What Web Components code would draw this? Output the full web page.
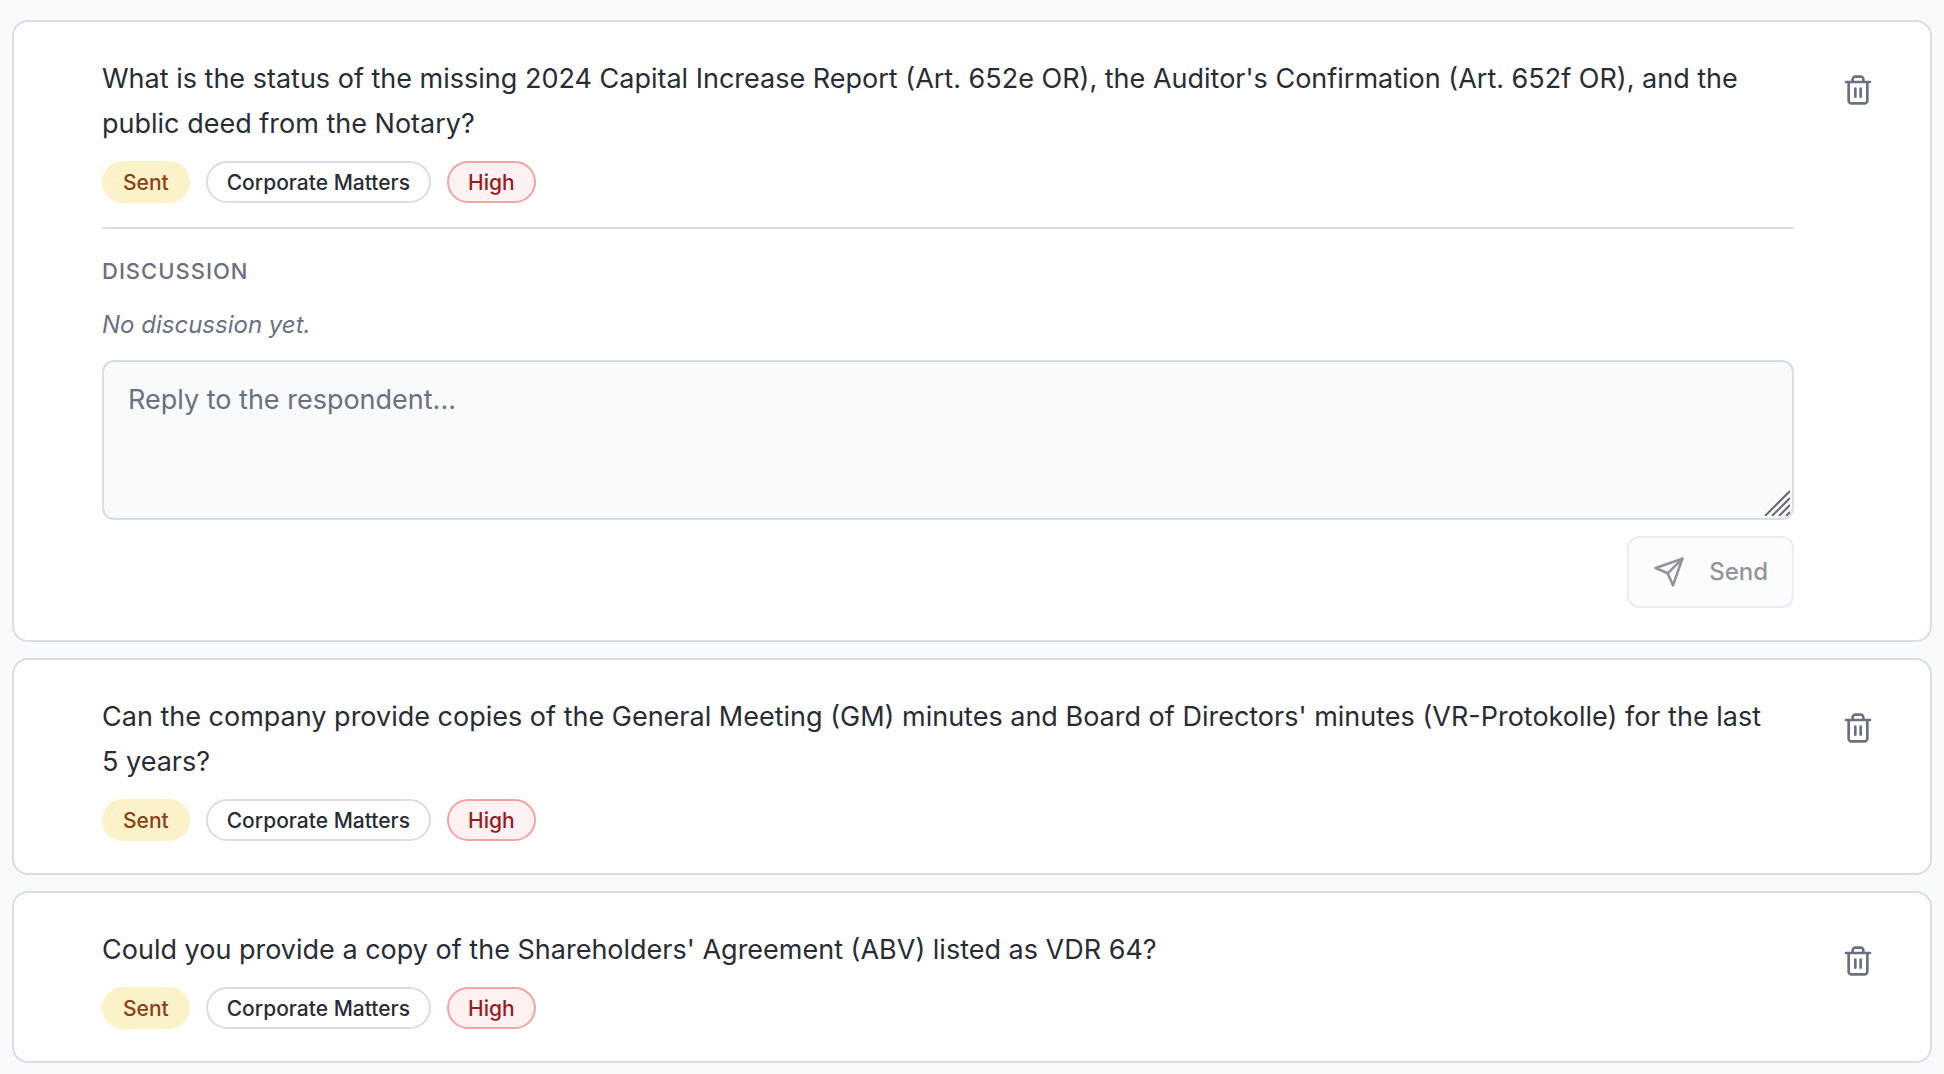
<!DOCTYPE html>
<html lang="en">
<head>
<meta charset="utf-8">
<title>Questions</title>
<style>
  body {
    margin: 0;
    padding: 20px 12px 12px;
    background: #f8fafc;
    color: #292c35;
    font-family: Inter, "Liberation Sans", sans-serif;
    --line: #d9dde8;
    --muted: #6b7080;
  }
</style>
</head>
<body>
<question-list>
  <question-card>
    What is the status of the missing 2024 Capital Increase Report (Art. 652e OR), the Auditor's Confirmation (Art. 652f OR), and the public deed from the Notary?
    <tag-pill slot="tags" tone="sent">Sent</tag-pill>
    <tag-pill slot="tags">Corporate Matters</tag-pill>
    <tag-pill slot="tags" tone="high">High</tag-pill>
    <discussion-panel slot="panel">No discussion yet.</discussion-panel>
  </question-card>
  <question-card>
    Can the company provide copies of the General Meeting (GM) minutes and Board of Directors' minutes (VR-Protokolle) for the last 5&nbsp;years?
    <tag-pill slot="tags" tone="sent">Sent</tag-pill>
    <tag-pill slot="tags">Corporate Matters</tag-pill>
    <tag-pill slot="tags" tone="high">High</tag-pill>
  </question-card>
  <question-card>
    Could you provide a copy of the Shareholders' Agreement (ABV) listed as VDR 64?
    <tag-pill slot="tags" tone="sent">Sent</tag-pill>
    <tag-pill slot="tags">Corporate Matters</tag-pill>
    <tag-pill slot="tags" tone="high">High</tag-pill>
  </question-card>
</question-list>

<script>
const define = (name, html) => customElements.define(name, class extends HTMLElement {
  constructor() {
    super();
    this.attachShadow({ mode: 'open' }).innerHTML = html;
  }
});

define('question-list', `
  <style>
    :host { display: flex; flex-direction: column; gap: 16px; }
  </style>
  <slot></slot>`);

define('tag-pill', `
  <style>
    :host {
      display: inline-block; box-sizing: border-box;
      padding: 5px 19px 3px; border: 2px solid var(--line); border-radius: 21px;
      background: #fff; font-size: 21px; line-height: 30px; font-weight: 500;
      white-space: nowrap;
    }
    :host([tone="sent"]) { background: #fcf2c9; border-color: #fcf2c9; color: #8a4117; }
    :host([tone="high"]) { background: #fdf1f1; border-color: #f3a3a3; color: #951c1f; }
  </style>
  <slot></slot>`);

define('question-card', `
  <style>
    :host {
      display: flex; gap: 32px; align-items: flex-start;
      padding: 34px 40px 32px 88px;
      border: 2px solid var(--line); border-radius: 16px; background: #fff;
    }
    .main { flex: 1; min-width: 0; }
    p { margin: 0 0 15px; font-size: 27px; line-height: 45px; }
    .tags { display: flex; flex-wrap: wrap; gap: 16px; }
    button {
      display: flex; margin: 2px 0; padding: 16px; border: 0; border-radius: 12px;
      background: none; color: var(--muted); cursor: pointer;
    }
  </style>
  <div class="main">
    <p><slot></slot></p>
    <div class="tags"><slot name="tags"></slot></div>
    <slot name="panel"></slot>
  </div>
  <button type="button" aria-label="Delete question">
    <svg width="32" height="32" viewBox="0 0 24 24" fill="none" stroke="currentColor" stroke-width="2" stroke-linecap="round" stroke-linejoin="round"><path d="M3 6h18M19 6v14c0 1-1 2-2 2H7c-1 0-2-1-2-2V6M8 6V4c0-1 1-2 2-2h4c1 0 2 1 2 2v2M10 11v6M14 11v6"/></svg>
  </button>`);

define('discussion-panel', `
  <style>
    :host {
      display: flex; flex-direction: column; margin-top: 24px; padding-top: 24px;
      border-top: 2px solid var(--line);
    }
    h3 {
      margin: 0 0 16px; color: var(--muted); font-size: 22px; line-height: 36px;
      font-weight: 500; letter-spacing: 1px; text-transform: uppercase;
    }
    p { margin: 0 0 15px; color: var(--muted); font-size: 24px; line-height: 40px; font-style: italic; }
    .field { position: relative; display: flex; margin-bottom: 16px; }
    textarea {
      box-sizing: border-box; width: 100%; height: 160px; margin: 0;
      padding: 15px 24px; border: 2px solid var(--line); border-radius: 12px;
      background: #f8fafc; color: inherit; font: inherit; font-size: 27px; line-height: 45px;
      resize: vertical;
    }
    textarea::placeholder { color: var(--muted); opacity: 1; }
    textarea::-webkit-resizer { background: transparent; }
    .grip { position: absolute; right: 4px; bottom: 4px; pointer-events: none; }
    button {
      display: flex; align-items: center; gap: 24px; align-self: flex-end;
      box-sizing: border-box; height: 72px; padding: 0 24px;
      border: 2px solid var(--line); border-radius: 12px; background: #f8fafc;
      color: #292c35; font: inherit; font-size: 24px; line-height: 40px; font-weight: 500;
    }
    button:disabled { opacity: .5; }
  </style>
  <h3>Discussion</h3>
  <p><slot></slot></p>
  <div class="field">
    <textarea aria-label="Reply" placeholder="Reply to the respondent..."></textarea>
    <svg class="grip" width="26" height="26" viewBox="0 0 26 26" fill="none" stroke="#66686c" stroke-width="2" aria-hidden="true"><path d="M1 26 26 1M8 26 26 8M15 26 26 15M22 26 26 22"/></svg>
  </div>
  <button type="button" disabled>
    <svg width="32" height="32" viewBox="0 0 24 24" fill="none" stroke="currentColor" stroke-width="2" stroke-linecap="round" stroke-linejoin="round"><path d="m22 2-7 20-4-9-9-4Z"/><path d="M22 2 11 13"/></svg>
    Send
  </button>`);
</script>
</body>
</html>
